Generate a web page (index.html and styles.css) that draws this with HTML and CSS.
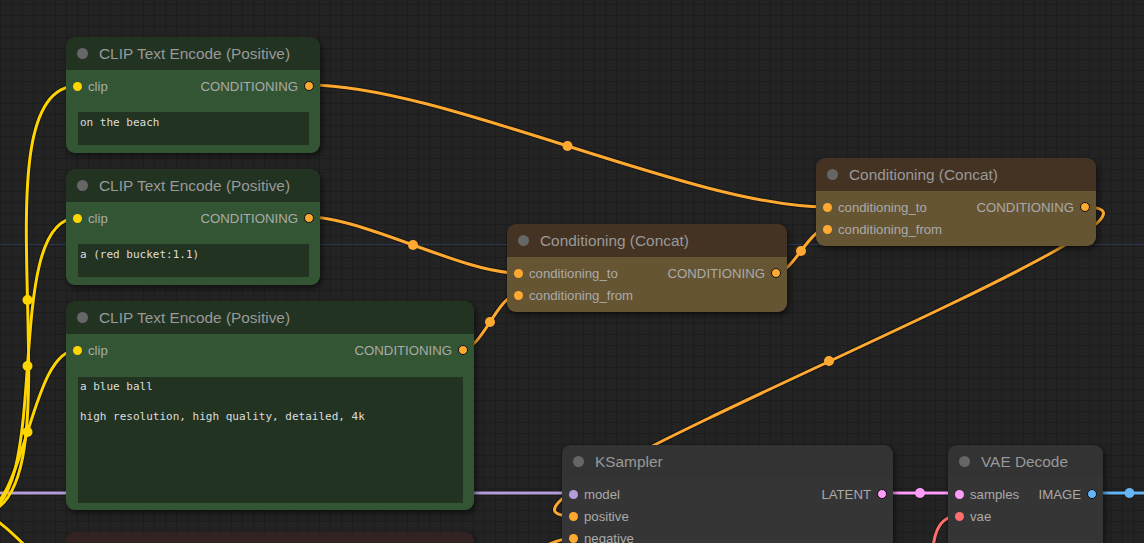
FILE: index.html
```html
<!DOCTYPE html>
<html>
<head>
<meta charset="utf-8">
<link rel="stylesheet" href="styles.css">
</head>
<body>
<div class="canvas">
  <div class="guide"></div>
  <svg class="links" width="1144" height="543" viewBox="0 0 1144 543">
    <g class="shade">
      <path d="M-300,493 H573"/>
      <path d="M882,493 H958"/>
      <path d="M1091,493 H1168"/>
      <path d="M940,840 C1021,840 877,516 958,516"/>
      <path d="M463,582 C493,582 543,538 573,538"/>
      <path d="M-22,514 C87.8,514 -32.8,86 77,86"/>
      <path d="M-22,514 C56,514 -1,218 77,218"/>
      <path d="M-22,514 C25.9,514 29.1,350 77,350"/>
      <path d="M-22,514 C8,514 47,582 77,582"/>
      <path d="M309,85 C441.8,85 693.2,207 826,207"/>
      <path d="M309,217 C362.9,217 463.1,273 517,273"/>
      <path d="M463,349 C482.1,349 497.9,295 517,295"/>
      <path d="M776,273 C792.7,273 809.3,229 826,229"/>
      <path d="M1085,207 C1234.5,207 423.5,516 573,516"/>
    </g>
    <path class="l model" d="M-300,493 H573"/>
    <path class="l latent" d="M882,493 H958"/>
    <path class="l image" d="M1091,493 H1168"/>
    <path class="l vae" d="M940,840 C1021,840 877,516 958,516"/>
    <path class="l cond" d="M463,582 C493,582 543,538 573,538"/>
    <path class="l clip" d="M-22,514 C87.8,514 -32.8,86 77,86"/>
    <path class="l clip" d="M-22,514 C56,514 -1,218 77,218"/>
    <path class="l clip" d="M-22,514 C25.9,514 29.1,350 77,350"/>
    <path class="l clip" d="M-22,514 C8,514 47,582 77,582"/>
    <path class="l cond" d="M309,85 C441.8,85 693.2,207 826,207"/>
    <path class="l cond" d="M309,217 C362.9,217 463.1,273 517,273"/>
    <path class="l cond" d="M463,349 C482.1,349 497.9,295 517,295"/>
    <path class="l cond" d="M776,273 C792.7,273 809.3,229 826,229"/>
    <path class="l cond" d="M1085,207 C1234.5,207 423.5,516 573,516"/>
    <circle class="m clip" cx="27.5" cy="300" r="5"/>
    <circle class="m clip" cx="27.5" cy="366" r="5"/>
    <circle class="m clip" cx="27.5" cy="432" r="5"/>
    <circle class="m cond" cx="567.5" cy="146" r="5"/>
    <circle class="m cond" cx="413" cy="245" r="5"/>
    <circle class="m cond" cx="490" cy="322" r="5"/>
    <circle class="m cond" cx="801" cy="251" r="5"/>
    <circle class="m cond" cx="829" cy="361" r="5"/>
    <circle class="m latent" cx="920" cy="493" r="5"/>
    <circle class="m image" cx="1129.5" cy="493" r="5"/>
  </svg>

  <div class="node green n-clip1">
    <div class="title"><span class="tdot"></span>CLIP Text Encode (Positive)</div>
    <div class="body">
      <div class="row"><span class="in"><i class="dot c-clip"></i>clip</span><span class="out">CONDITIONING<i class="dot o c-cond"></i></span></div>
      <div class="ta ta-s">on the beach</div>
    </div>
  </div>

  <div class="node green n-clip2">
    <div class="title"><span class="tdot"></span>CLIP Text Encode (Positive)</div>
    <div class="body">
      <div class="row"><span class="in"><i class="dot c-clip"></i>clip</span><span class="out">CONDITIONING<i class="dot o c-cond"></i></span></div>
      <div class="ta ta-s">a (red bucket:1.1)</div>
    </div>
  </div>

  <div class="node green n-clip3">
    <div class="title"><span class="tdot"></span>CLIP Text Encode (Positive)</div>
    <div class="body">
      <div class="row"><span class="in"><i class="dot c-clip"></i>clip</span><span class="out">CONDITIONING<i class="dot o c-cond"></i></span></div>
      <div class="ta ta-l">a blue ball

high resolution, high quality, detailed, 4k</div>
    </div>
  </div>

  <div class="node red n-red">
    <div class="title"><span class="tdot"></span></div>
    <div class="body"></div>
  </div>

  <div class="node yellow n-cat1">
    <div class="title"><span class="tdot"></span>Conditioning (Concat)</div>
    <div class="body">
      <div class="row"><span class="in"><i class="dot c-cond"></i>conditioning_to</span><span class="out">CONDITIONING<i class="dot o c-cond"></i></span></div>
      <div class="row"><span class="in"><i class="dot c-cond"></i>conditioning_from</span></div>
    </div>
  </div>

  <div class="node yellow n-cat2">
    <div class="title"><span class="tdot"></span>Conditioning (Concat)</div>
    <div class="body">
      <div class="row"><span class="in"><i class="dot c-cond"></i>conditioning_to</span><span class="out">CONDITIONING<i class="dot o c-cond"></i></span></div>
      <div class="row"><span class="in"><i class="dot c-cond"></i>conditioning_from</span></div>
    </div>
  </div>

  <div class="node gray n-ks">
    <div class="title"><span class="tdot"></span>KSampler</div>
    <div class="body">
      <div class="row"><span class="in"><i class="dot c-model"></i>model</span><span class="out">LATENT<i class="dot o c-latent"></i></span></div>
      <div class="row"><span class="in"><i class="dot c-cond"></i>positive</span></div>
      <div class="row"><span class="in"><i class="dot c-cond"></i>negative</span></div>
    </div>
  </div>

  <div class="node gray n-vae">
    <div class="title"><span class="tdot"></span>VAE Decode</div>
    <div class="body">
      <div class="row"><span class="in"><i class="dot c-latent"></i>samples</span><span class="out">IMAGE<i class="dot o c-image"></i></span></div>
      <div class="row"><span class="in"><i class="dot c-vae"></i>vae</span></div>
    </div>
  </div>
</div>
</body>
</html>
```
FILE: styles.css
```css
html, body {
  margin: 0;
  padding: 0;
  background: #222;
}
.canvas {
  position: relative;
  width: 1144px;
  height: 543px;
  overflow: hidden;
  background-color: #232323;
  background-image:
    linear-gradient(to right, #1d1d1d 1px, transparent 1px),
    linear-gradient(to bottom, #1d1d1d 1px, transparent 1px);
  background-size: 11px 11px;
  background-position: 0 4px;
}
.guide {
  position: absolute;
  left: 0;
  top: 244px;
  width: 1144px;
  height: 1px;
  background: #2c3550;
}
.links {
  position: absolute;
  left: 0;
  top: 0;
}
.shade path {
  fill: none;
  stroke: rgba(0, 0, 0, 0.35);
  stroke-width: 5;
}
.l {
  fill: none;
  stroke-width: 3;
}
.l.clip { stroke: #ffd500; }
.l.cond { stroke: #ffa931; }
.l.model { stroke: #b39ddb; }
.l.latent { stroke: #ff9cf9; }
.l.image { stroke: #64b5f6; }
.l.vae { stroke: #ff6e6e; }
.m.clip { fill: #ffd500; }
.m.cond { fill: #ffa931; }
.m.latent { fill: #ff9cf9; }
.m.image { fill: #64b5f6; }

.node {
  position: absolute;
  border-radius: 9px;
  box-shadow: 2px 3px 6px rgba(0, 0, 0, 0.55);
  display: flex;
  flex-direction: column;
  overflow: hidden;
  font-family: "Liberation Sans", Arial, sans-serif;
}
.title {
  height: 33px;
  flex: none;
  display: flex;
  align-items: center;
  color: #999;
  font-size: 15.4px;
  white-space: nowrap;
  box-shadow: 0 1px 0 rgba(0, 0, 0, 0.12);
}
.tdot {
  width: 11px;
  height: 11px;
  border-radius: 50%;
  background: #666;
  margin-left: 10.5px;
  margin-right: 11.5px;
  flex: none;
}
.body {
  flex: 1;
  display: flex;
  flex-direction: column;
  padding-top: 5px;
}
.row {
  height: 22px;
  flex: none;
  display: flex;
  align-items: center;
  justify-content: space-between;
  color: #aaa;
  font-size: 13.2px;
  white-space: nowrap;
}
.in, .out {
  display: flex;
  align-items: center;
}
.dot {
  display: block;
  width: 9px;
  height: 9px;
  border-radius: 50%;
  margin: 0 6.5px;
}
.dot.o {
  width: 8px;
  height: 8px;
  border: 1px solid #111;
  margin: 0 6px;
}
.c-clip { background: #ffd500; }
.c-cond { background: #ffa931; }
.c-model { background: #b39ddb; }
.c-latent { background: #ff9cf9; }
.c-image { background: #64b5f6; }
.c-vae { background: #ff6e6e; }

.ta {
  margin: 15px 11px 0 12px;
  padding: 3px 2px 2px;
  background: #223322;
  color: #dddddd;
  font-family: "DejaVu Sans Mono", "Liberation Mono", monospace;
  font-size: 11px;
  line-height: 15px;
  white-space: pre;
  box-sizing: border-box;
  overflow: hidden;
}
.ta-s { height: 33px; }
.ta-l { height: 126px; margin-top: 16px; padding-top: 2px; }

.green .title { background: #223322; }
.green .body { background: #335533; }
.yellow .title { background: #443322; }
.yellow .body { background: #665533; }
.gray .title { background: #333333; }
.gray .body { background: #353535; }
.red .title { background: #332222; }
.red .body { background: #553333; }

.n-clip1 { left: 66px; top: 37px; width: 254px; height: 116px; }
.n-clip2 { left: 66px; top: 169px; width: 254px; height: 116px; }
.n-clip3 { left: 66px; top: 301px; width: 408px; height: 209px; }
.n-red { left: 66px; top: 532px; width: 408px; height: 120px; }
.n-cat1 { left: 507px; top: 224px; width: 280px; height: 88px; }
.n-cat2 { left: 816px; top: 158px; width: 280px; height: 88px; }
.n-ks { left: 562px; top: 445px; width: 331px; height: 200px; }
.n-vae { left: 948px; top: 445px; width: 155px; height: 150px; }
```
